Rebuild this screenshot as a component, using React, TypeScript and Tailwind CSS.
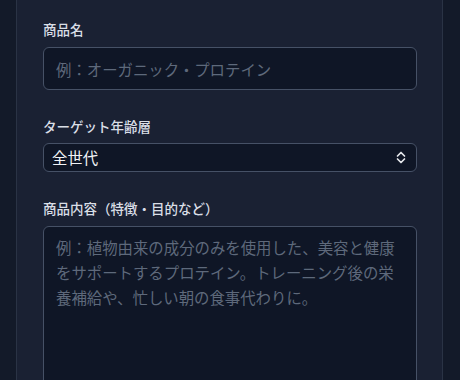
export default function App() {
    const font = { fontFamily: '"Noto Sans CJK JP", "Noto Sans", sans-serif' };

    return (
        <div className="w-[460px] h-[380px] overflow-hidden bg-[#131a29]" style={font}>
            <div className="ml-4 w-[427px] h-[380px] bg-[#1a2133] border-x border-[#2a3345] pl-[26px] pr-[25px] pt-[19px]">
                <label className="block text-[13.5px] leading-5 font-medium text-[#d9dee6] mb-[8px]">商品名</label>
                <input
                    type="text"
                    placeholder="例：オーガニック・プロテイン"
                    className="block w-full h-[43px] px-3 rounded-md bg-[#0f1626] border border-[#465166] text-[15.4px] text-white placeholder:text-[#5e697b] outline-none"
                />

                <label className="block mt-[26px] text-[13.5px] leading-5 font-medium text-[#d9dee6] mb-[7px]">ターゲット年齢層</label>
                <div className="flex items-center justify-between w-full h-[29px] pl-[8px] pr-[10px] rounded-md bg-[#0f1626] border border-[#465166]">
                    <span className="text-[15.4px] text-[#f1f3f6]">全世代</span>
                    <svg width="10" height="13" viewBox="0 0 10 13" fill="none" stroke="#e5e7eb" strokeWidth="1.7" strokeLinecap="round" strokeLinejoin="round">
                        <path d="M1.5 5 L5 1.5 L8.5 5" />
                        <path d="M1.5 8 L5 11.5 L8.5 8" />
                    </svg>
                </div>

                <label className="block mt-[26px] text-[13.5px] leading-5 font-medium text-[#d9dee6] mb-[8px]">商品内容（特徴・目的など）</label>
                <textarea
                    placeholder="例：植物由来の成分のみを使用した、美容と健康をサポートするプロテイン。トレーニング後の栄養補給や、忙しい朝の食事代わりに。"
                    className="block w-full h-[180px] px-3 py-2 rounded-md bg-[#0f1626] border border-[#465166] text-[15.4px] leading-[25px] text-white placeholder:text-[#5e697b] outline-none resize-none"
                />
            </div>
        </div>
    );
}
